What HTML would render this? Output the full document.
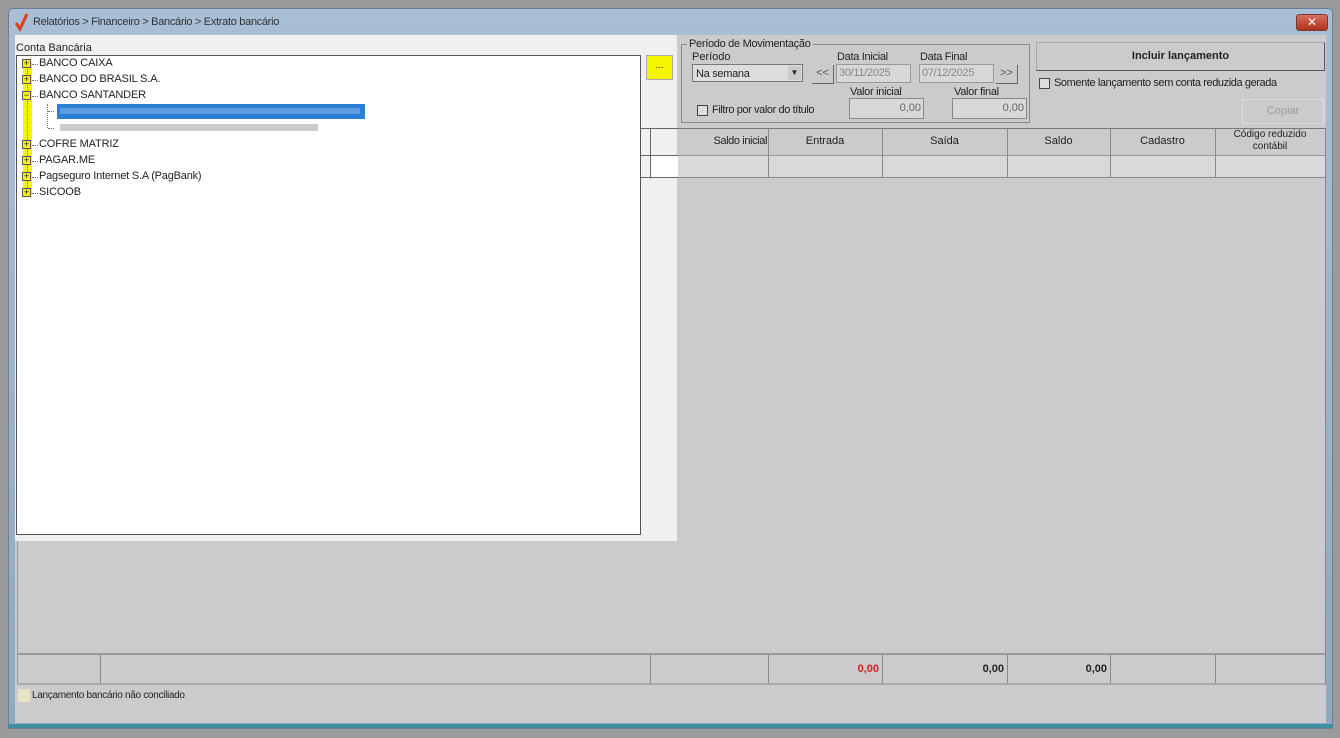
<!DOCTYPE html>
<html><head><meta charset="utf-8"><style>
*{margin:0;padding:0;box-sizing:border-box}
body{width:1340px;height:738px;background:#9b9b9b;font-family:"Liberation Sans",sans-serif;font-size:11px;color:#222;position:relative;overflow:hidden}
.a{position:absolute}
.t{font-size:11px;white-space:nowrap}
.tr{letter-spacing:-0.15px;top:0}
.plus{position:absolute;width:9px;height:9px;border:1px solid #555;background:#f5f500;font-size:9px;line-height:7px;text-align:center}
.dh{position:absolute;width:6px;border-top:1px dotted #777}
</style></head><body>
<div class="a" style="left:8px;top:8px;width:1325px;height:721px;background:linear-gradient(#a9bfd6,#90a8c0);border:1px solid #6b7f94;border-radius:5px 5px 0 0"></div>
<div class="a" style="left:8px;top:724px;width:1325px;height:4px;background:#3f8fa0"></div>
<svg class="a" style="left:14px;top:12px" width="16" height="20"><path d="M2 11 L6 17 L13 2" stroke="#e0401a" stroke-width="3" fill="none"/></svg>
<div class="a t" style="left:33px;top:16px;font-size:11px;color:#333;letter-spacing:-0.3px">Relatórios &gt; Financeiro &gt; Bancário &gt; Extrato bancário</div>
<div class="a" style="left:1296px;top:14px;width:32px;height:17px;background:linear-gradient(#d9705f,#b0301c);border:1px solid #7a3a30;border-radius:3px;color:#fff;text-align:center;font-size:12px;line-height:15px">✕</div>
<div class="a" style="left:15px;top:35px;width:1311px;height:688px;background:#cbcbcb"></div>
<div class="a" style="left:15px;top:35px;width:662px;height:506px;background:#f0f0f0"></div>
<div class="a t" style="left:16px;top:42px">Conta Bancária</div>
<div class="a" style="left:16px;top:55px;width:625px;height:480px;background:#fff;border:1px solid #555"></div>
<div class="a" style="left:23px;top:62px;width:9px;height:133px;background:#f5f500"></div>
<div class="a" style="left:27px;top:62px;height:132px;border-left:1px dotted #777"></div>
<div class="a" style="left:47px;top:104px;height:24px;border-left:1px dotted #777"></div>
<div class="dh" style="left:48px;top:111px"></div><div class="dh" style="left:48px;top:128px"></div>
<div class="dh" style="left:32px;top:64px"></div><div class="dh" style="left:32px;top:80px"></div><div class="dh" style="left:32px;top:96px"></div><div class="dh" style="left:32px;top:145px"></div><div class="dh" style="left:32px;top:161px"></div><div class="dh" style="left:32px;top:177px"></div><div class="dh" style="left:32px;top:193px"></div>
<div class="plus" style="left:22px;top:59px">+</div><div class="a t" style="left:39px;top:57px;letter-spacing:-0.15px">BANCO CAIXA</div>
<div class="plus" style="left:22px;top:75px">+</div><div class="a t" style="left:39px;top:73px;letter-spacing:-0.15px">BANCO DO BRASIL S.A.</div>
<div class="plus" style="left:22px;top:91px">−</div><div class="a t" style="left:39px;top:89px;letter-spacing:-0.15px">BANCO SANTANDER</div>
<div class="a" style="left:57px;top:104px;width:308px;height:15px;background:#2b7fd6"></div>
<div class="a" style="left:60px;top:108px;width:300px;height:6px;background:#7fb0e6;opacity:.6"></div>
<div class="a" style="left:60px;top:124px;width:258px;height:7px;background:#ccc"></div>
<div class="plus" style="left:22px;top:140px">+</div><div class="a t" style="left:39px;top:138px;letter-spacing:-0.15px">COFRE MATRIZ</div>
<div class="plus" style="left:22px;top:156px">+</div><div class="a t" style="left:39px;top:154px;letter-spacing:-0.15px">PAGAR.ME</div>
<div class="plus" style="left:22px;top:172px">+</div><div class="a t" style="left:39px;top:170px;letter-spacing:-0.2px">Pagseguro Internet S.A (PagBank)</div>
<div class="plus" style="left:22px;top:188px">+</div><div class="a t" style="left:39px;top:186px;letter-spacing:-0.15px">SICOOB</div>
<div class="a" style="left:646px;top:55px;width:27px;height:25px;background:#f5f500;border:1px solid #aaa;text-align:center;font-size:10px;line-height:20px">...</div>
<div class="a" style="left:640px;top:128px;width:38px;height:50px;border-top:1px solid #666;border-bottom:1px solid #666"></div>
<div class="a" style="left:640px;top:155px;width:38px;height:1px;background:#666"></div>
<div class="a" style="left:650px;top:128px;width:1px;height:50px;background:#666"></div>
<div class="a" style="left:651px;top:156px;width:27px;height:21px;background:#fff"></div>
<!-- filter group -->
<div class="a" style="left:681px;top:44px;width:349px;height:79px;border:1px solid #888"></div>
<div class="a t" style="left:687px;top:38px;background:#cbcbcb;padding:0 2px;letter-spacing:-0.3px">Período de Movimentação</div>
<div class="a t" style="left:692px;top:51px">Período</div>
<div class="a" style="left:692px;top:64px;width:111px;height:18px;background:#ddd;border:1px solid #777"></div>
<div class="a t" style="left:696px;top:68px;letter-spacing:-0.3px">Na semana</div>
<div class="a" style="left:788px;top:66px;width:13px;height:14px;background:#cbcbcb;font-size:8px;text-align:center;line-height:14px">▼</div>
<div class="a t" style="left:837px;top:51px;letter-spacing:-0.3px">Data Inicial</div>
<div class="a t" style="left:920px;top:51px;letter-spacing:-0.3px">Data Final</div>
<div class="a" style="left:812px;top:65px;width:22px;height:19px;border-right:1px solid #666;border-bottom:1px solid #666;text-align:center;line-height:17px;color:#555">&lt;&lt;</div>
<div class="a" style="left:836px;top:64px;width:75px;height:19px;border:1px solid #999;background:#d8d8d8;color:#888;padding:2px;letter-spacing:-0.3px">30/11/2025</div>
<div class="a" style="left:919px;top:64px;width:75px;height:19px;border:1px solid #999;background:#d8d8d8;color:#888;padding:2px;letter-spacing:-0.3px">07/12/2025</div>
<div class="a" style="left:996px;top:65px;width:22px;height:19px;border-right:1px solid #666;border-bottom:1px solid #666;text-align:center;line-height:17px;color:#555">&gt;&gt;</div>
<div class="a t" style="left:850px;top:86px;letter-spacing:-0.3px">Valor inicial</div>
<div class="a t" style="left:954px;top:86px;letter-spacing:-0.3px">Valor final</div>
<div class="a" style="left:849px;top:98px;width:75px;height:21px;border:1px solid #888;background:#d8d8d8;text-align:right;padding:3px 2px;color:#666">0,00</div>
<div class="a" style="left:952px;top:98px;width:75px;height:21px;border:1px solid #888;background:#d8d8d8;text-align:right;padding:3px 2px;color:#666">0,00</div>
<div class="a" style="left:697px;top:105px;width:11px;height:11px;border:1px solid #444;background:#ddd"></div>
<div class="a t" style="left:712px;top:104px;letter-spacing:-0.4px">Filtro por valor do título</div>
<div class="a" style="left:1036px;top:42px;width:289px;height:29px;border:1px solid #aaa;border-right-color:#555;border-bottom-color:#555;text-align:center;font-weight:bold;line-height:27px">Incluir lançamento</div>
<div class="a" style="left:1039px;top:78px;width:11px;height:11px;border:1px solid #444;background:#ddd"></div>
<div class="a t" style="left:1054px;top:77px;letter-spacing:-0.4px">Somente lançamento sem conta reduzida gerada</div>
<div class="a" style="left:1242px;top:99px;width:82px;height:25px;border:1px solid #ddd;text-align:center;line-height:23px;color:#999">Copiar</div>
<!-- grid -->
<div class="a" style="left:678px;top:128px;width:648px;height:527px;border-right:1px solid #888"></div>
<div class="a" style="left:678px;top:128px;width:647px;height:1px;background:#777"></div>
<div class="a" style="left:678px;top:155px;width:647px;height:23px;background:#d9d9d9;border-top:1px solid #999;border-bottom:1px solid #888"></div>
<div class="a" style="left:768px;top:128px;width:1px;height:50px;background:#888"></div>
<div class="a" style="left:882px;top:128px;width:1px;height:50px;background:#888"></div>
<div class="a" style="left:1007px;top:128px;width:1px;height:50px;background:#888"></div>
<div class="a" style="left:1110px;top:128px;width:1px;height:50px;background:#888"></div>
<div class="a" style="left:1215px;top:128px;width:1px;height:50px;background:#888"></div>
<div class="a t" style="left:678px;top:135px;width:89px;text-align:right;letter-spacing:-0.4px">Saldo inicial</div>
<div class="a t" style="left:768px;top:135px;width:114px;text-align:center">Entrada</div>
<div class="a t" style="left:882px;top:135px;width:125px;text-align:center">Saída</div>
<div class="a t" style="left:1007px;top:135px;width:103px;text-align:center">Saldo</div>
<div class="a t" style="left:1110px;top:135px;width:105px;text-align:center">Cadastro</div>
<div class="a" style="left:1215px;top:129px;width:110px;text-align:center;font-size:10px;line-height:12px">Código reduzido<br>contábil</div>
<div class="a" style="left:17px;top:541px;width:1px;height:143px;background:#999"></div>
<!-- footer -->
<div class="a" style="left:18px;top:653px;width:1308px;height:32px;border-top:2px solid #999;border-bottom:2px solid #aaa;border-right:1px solid #888"></div>
<div class="a" style="left:100px;top:655px;width:1px;height:28px;background:#888"></div>
<div class="a" style="left:650px;top:655px;width:1px;height:28px;background:#888"></div>
<div class="a" style="left:768px;top:655px;width:1px;height:28px;background:#888"></div>
<div class="a" style="left:882px;top:655px;width:1px;height:28px;background:#888"></div>
<div class="a" style="left:1007px;top:655px;width:1px;height:28px;background:#888"></div>
<div class="a" style="left:1110px;top:655px;width:1px;height:28px;background:#888"></div>
<div class="a" style="left:1215px;top:655px;width:1px;height:28px;background:#888"></div>
<div class="a t" style="left:780px;top:663px;width:99px;text-align:right;color:#d02020;font-weight:bold">0,00</div>
<div class="a t" style="left:890px;top:663px;width:114px;text-align:right;font-weight:bold">0,00</div>
<div class="a t" style="left:1010px;top:663px;width:97px;text-align:right;font-weight:bold">0,00</div>
<div class="a" style="left:17px;top:688px;width:14px;height:15px;background:#e6e6c4;border:1px solid #ccc"></div>
<div class="a t" style="left:32px;top:690px;font-size:10px;letter-spacing:-0.3px">Lançamento bancário não conciliado</div>
</body></html>
